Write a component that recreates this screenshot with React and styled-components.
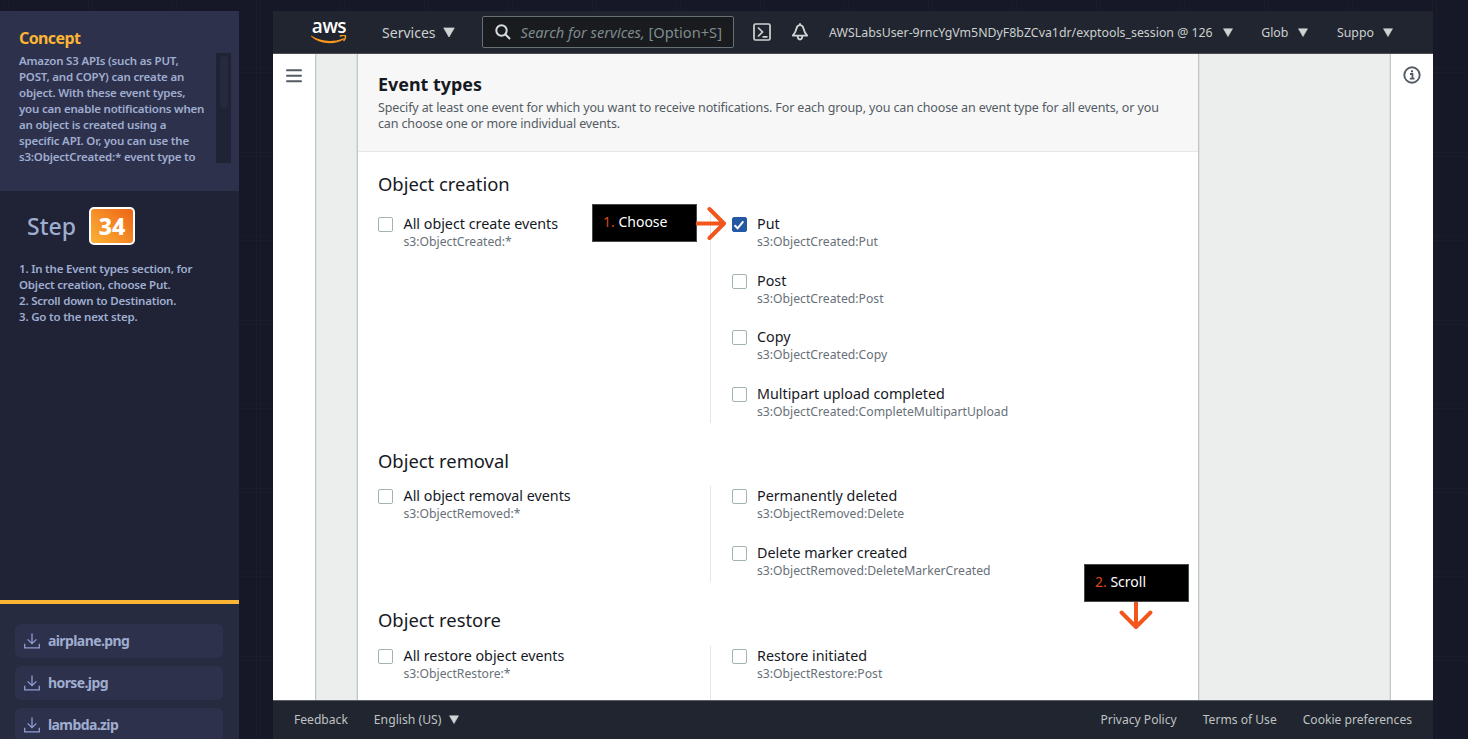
import React from "react";
import styled, { createGlobalStyle } from "styled-components";

const Global = createGlobalStyle`
  *, *::before, *::after { box-sizing: border-box; }
  html, body { margin: 0; height: 100%; overflow: hidden; }
  body { font-family: "Noto Sans", "Open Sans", sans-serif; background: #161826; }
`;

const Page = styled.div`
  display: flex;
  width: 100vw;
  height: 100vh;
  padding-top: 11px;
  overflow: hidden;
  background-color: #161827;
  background-image:
    linear-gradient(90deg, #1a1c2b 1px, transparent 1px 4px, #1a1c2b 4px 5px, transparent 5px),
    linear-gradient(180deg, #1a1c2b 1px, transparent 1px 4px, #1a1c2b 4px 5px, transparent 5px);
  background-size: 84px 84px;
  background-position: 4px 68px;
`;

const Sidebar = styled.aside`
  width: 239px;
  flex: none;
  display: flex;
  flex-direction: column;
  background: #202335;
  color: #9fadd0;
`;

const Concept = styled.section`
  height: 180px;
  flex: none;
  padding: 16px 8px 0 19px;
  background: #2e314b;
`;

const ConceptTitle = styled.h2`
  margin: 0;
  font-size: 16px;
  line-height: 22px;
  font-weight: 700;
  letter-spacing: -0.6px;
  color: #fbb534;
`;

const ConceptBody = styled.div`
  display: flex;
  justify-content: space-between;
  margin-top: 4px;
  height: 110px;
`;

const SideText = styled.p`
  margin: 0;
  font-size: 11.5px;
  line-height: 16px;
  font-weight: 600;
  letter-spacing: -0.2px;
  white-space: nowrap;
  color: #9fadd0;
`;

const ScrollTrack = styled.div`
  width: 15px;
  height: 110px;
  padding: 3px 3px 0 4px;
  background: #202335;
`;

const ScrollThumb = styled.div`
  height: 52px;
  border-radius: 4px;
  background: #272a3f;
`;

const Step = styled.section`
  flex: 1;
  padding: 16px 19px;
`;

const StepHead = styled.div`
  display: flex;
  align-items: center;
  gap: 13px;
  height: 38px;
  margin: 0 0 16px 8px;
  font-size: 23px;
  font-weight: 500;
`;

const StepNumber = styled.span`
  width: 46px;
  height: 38px;
  border: 2px solid #fff;
  border-radius: 5px;
  background: linear-gradient(45deg, #fbb234, #ee6417);
  color: #fff;
  font-size: 23px;
  line-height: 34px;
  font-weight: 800;
  text-align: center;
`;

const Files = styled.section`
  height: 139px;
  flex: none;
  padding: 20px 16px 0 15px;
  border-top: 4px solid #fbb534;
  background: #272b3f;
  display: flex;
  flex-direction: column;
  gap: 8px;
  overflow: hidden;
`;

const FileRow = styled.div`
  flex: none;
  height: 34px;
  display: flex;
  align-items: center;
  gap: 8px;
  padding: 0 0 1px 9px;
  border-radius: 6px;
  background: #2e314b;
  color: #9fadd0;
  font-size: 14px;
  line-height: 20px;
  font-weight: 700;
  letter-spacing: -0.6px;
`;

const Console = styled.main`
  width: 1160px;
  margin-left: 34px;
  flex: none;
  display: flex;
  flex-direction: column;
  background: #fff;
`;

const TopBar = styled.header`
  height: 43px;
  flex: none;
  display: flex;
  align-items: center;
  background: #21252f;
  border-bottom: 1px solid #4a4d52;
  color: #ccd0d0;
`;

const Logo = styled.div`
  width: 36px;
  height: 26px;
  margin: 2px 0 0 38px;
  display: flex;
  flex-direction: column;
  align-items: center;
`;

const LogoWord = styled.span`
  height: 15px;
  font-family: "Open Sans", sans-serif;
  font-size: 19px;
  line-height: 12px;
  font-weight: 600;
  letter-spacing: -0.5px;
  color: #fff;
`;

const Menu = styled.div`
  display: flex;
  align-items: center;
  gap: ${(p) => p.$gap}px;
  margin-left: ${(p) => p.$ml}px;
  font-size: ${(p) => p.$size || 12.35}px;
  white-space: nowrap;
`;

const Search = styled.div`
  width: 252px;
  height: 32px;
  margin-left: 27px;
  display: flex;
  align-items: center;
  gap: 10px;
  padding-left: 12px;
  border: 1px solid #687078;
  border-radius: 2px;
  background: #1a1b1f;
  color: #7f8c8d;
  font-size: 14.65px;
  white-space: nowrap;
`;

const IconSlot = styled.div`
  display: flex;
  margin-left: ${(p) => p.$ml}px;
`;

const Body = styled.div`
  flex: 1;
  min-height: 0;
  display: flex;
  overflow: hidden;
  background: #eceeee;
`;

const Rail = styled.div`
  width: 42px;
  flex: none;
  display: flex;
  justify-content: center;
  padding-top: ${(p) => p.$pt}px;
  background: #fff;
  box-shadow: 0 0 0 1.3px #c2c9ca;
`;

const Panel = styled.section`
  position: relative;
  width: 840px;
  flex: none;
  margin: 0 193px 0 43px;
  background: #fff;
  box-shadow: 0 0 0 1.3px #bfc6c7;
`;

const PanelHead = styled.div`
  height: 98px;
  padding: 18px 20px 0;
  border-bottom: 1px solid #e6e8e8;
  background: #f7f7f7;
`;

const PanelTitle = styled.h1`
  margin: 0;
  font-size: 17.9px;
  line-height: 24px;
  font-weight: 700;
  color: #16191f;
`;

const PanelText = styled.p`
  margin: 4px 0 0;
  font-size: 12.5px;
  line-height: 16px;
  letter-spacing: -0.127px;
  color: #545b64;
  white-space: nowrap;
`;

const PanelBody = styled.div`
  padding: 20px 20px 0;
`;

const Group = styled.section`
  margin-bottom: 26px;
`;

const GroupTitle = styled.h2`
  margin: 0 0 ${(p) => p.$mb}px;
  font-size: 18.4px;
  line-height: 23px;
  padding-bottom: 1px;
  font-weight: 400;
  color: #16191f;
`;

const Columns = styled.div`
  display: grid;
  grid-template-columns: 332px 1fr;
  min-height: 96px;
`;

const Column = styled.div`
  display: flex;
  flex-direction: column;
  gap: 17px;
  ${(p) => p.$ruled && "border-left: 1px solid #e3e6e6; padding-left: 20.5px;"}
`;

const Option = styled.div`
  height: 39.5px;
  display: flex;
  align-items: flex-start;
  gap: 10.5px;
  white-space: nowrap;
`;

const Box = styled.span`
  width: 15px;
  height: 15px;
  flex: none;
  margin: 3px 0 0;
  display: flex;
  align-items: center;
  justify-content: center;
  border: 1px solid ${(p) => (p.$on ? "#2458a3" : "#a3b3b4")};
  border-radius: 2px;
  background: ${(p) => (p.$on ? "#2458a3" : "#fff")};
`;

const OptionLabel = styled.div`
  font-size: 14.3px;
  line-height: 20px;
  color: #16191f;
`;

const OptionCode = styled.div`
  font-size: 12.2px;
  line-height: 16px;
  color: #687078;
`;

const Callout = styled.div`
  position: absolute;
  left: ${(p) => p.$x}px;
  top: ${(p) => p.$y}px;
  width: 105px;
  height: 38px;
  padding-left: 10px;
  border: 1px solid #46484c;
  background: #000;
  color: #fff;
  font-size: 14px;
  line-height: 34px;
  white-space: nowrap;
  b { color: #d8481a; font-weight: 400; }
`;

const Arrow = styled.svg`
  position: absolute;
  left: ${(p) => p.$x}px;
  top: ${(p) => p.$y}px;
`;

const Footer = styled.footer`
  height: 39px;
  flex: none;
  display: flex;
  align-items: center;
  gap: 26px;
  padding: 0 21px 2px;
  background: #21252f;
  border-top: 1px solid #5b5e62;
  color: #bfc3c4;
  font-size: 12.1px;
  white-space: nowrap;
`;

const Spacer = styled.div`
  flex: 1;
`;

const Caret = ({ w = 10, h = 9 }) => (
  <svg width={w} height={h} viewBox="0 0 10 9">
    <path d="M.5.8h9L5 8.6z" fill="#d0d4d4" stroke="#d0d4d4" strokeWidth=".6" strokeLinejoin="round" />
  </svg>
);

const Download = () => (
  <svg width="16" height="16" viewBox="0 0 16 16" fill="none" stroke="#8f9cd6" strokeWidth="1.3">
    <path d="M8 .5v10M3.6 6.4 8 10.700l4.400-4.300M.7 10.800v4h14.600v-4" />
  </svg>
);

const Item = ({ label, code, on }) => (
  <Option>
    <Box $on={on}>
      {on && (
        <svg width="12" height="12" viewBox="0 0 12 12" fill="none" stroke="#fff" strokeWidth="2">
          <path d="M1.500 6.300 4.600 9.300 10.300 2.400" />
        </svg>
      )}
    </Box>
    <div>
      <OptionLabel>{label}</OptionLabel>
      <OptionCode>{code}</OptionCode>
    </div>
  </Option>
);

const groups = [
  {
    title: "Object creation", mb: 18,
    all: ["All object create events", "s3:ObjectCreated:*"],
    items: [
      ["Put", "s3:ObjectCreated:Put", true],
      ["Post", "s3:ObjectCreated:Post"],
      ["Copy", "s3:ObjectCreated:Copy"],
      ["Multipart upload completed", "s3:ObjectCreated:CompleteMultipartUpload"],
    ],
  },
  {
    title: "Object removal", mb: 13,
    all: ["All object removal events", "s3:ObjectRemoved:*"],
    items: [
      ["Permanently deleted", "s3:ObjectRemoved:Delete"],
      ["Delete marker created", "s3:ObjectRemoved:DeleteMarkerCreated"],
    ],
  },
  {
    title: "Object restore", mb: 14,
    all: ["All restore object events", "s3:ObjectRestore:*"],
    items: [["Restore initiated", "s3:ObjectRestore:Post"]],
  },
];

export default function App() {
  return (
    <Page>
      <Global />
      <Sidebar>
        <Concept>
          <ConceptTitle>Concept</ConceptTitle>
          <ConceptBody>
            <SideText>
              Amazon S3 APIs (such as PUT,<br />
              POST, and COPY) can create an<br />
              object. With these event types,<br />
              you can enable notifications when<br />
              an object is created using a<br />
              specific API. Or, you can use the<br />
              s3:ObjectCreated:* event type to
            </SideText>
            <ScrollTrack><ScrollThumb /></ScrollTrack>
          </ConceptBody>
        </Concept>
        <Step>
          <StepHead>Step<StepNumber>34</StepNumber></StepHead>
          <SideText>
            1. In the Event types section, for<br />
            Object creation, choose Put.<br />
            2. Scroll down to Destination.<br />
            3. Go to the next step.
          </SideText>
        </Step>
        <Files>
          <FileRow><Download />airplane.png</FileRow>
          <FileRow><Download />horse.jpg</FileRow>
          <FileRow><Download />lambda.zip</FileRow>
        </Files>
      </Sidebar>

      <Console>
        <TopBar>
          <Logo>
            <LogoWord>aws</LogoWord>
            <svg width="36" height="9" viewBox="0 0 36 9" fill="none">
              <path d="M.6.800C9 6.500 22 7.500 32 3.400c.9-.4 1.500.4.700 1C25 9.800 8.500 9.800.2 1.500c-.3-.4 0-.9.400-.7z" fill="#f7981d" />
              <path d="M28.800 1.300c2.300-1 4.900-1 5.600-.4.500.6-.2 3.400-1.900 5" stroke="#f7981d" strokeWidth="1.500" />
            </svg>
          </Logo>
          <Menu $ml={35} $gap={7} $size={14.05}>Services<Caret w={12} h={10.5} /></Menu>
          <Search>
            <svg width="16" height="16" viewBox="0 0 16 16" fill="none" stroke="#d5dbdb" strokeWidth="2">
              <circle cx="6.500" cy="6.500" r="5.200" />
              <path d="m10.300 10.300 4.700 4.700" />
            </svg>
            <span><i>Search for services,</i> [Option+S]</span>
          </Search>
          <IconSlot $ml={19}>
            <svg width="18" height="18" viewBox="0 0 18 18" fill="none" stroke="#d0d4d4" strokeWidth="1.700">
              <rect x="1" y="1" width="16" height="16" rx="1.500" />
              <path d="m5 4.500 4.500 4.500L5 13.500M9.500 13.800h5" />
            </svg>
          </IconSlot>
          <IconSlot $ml={20}>
            <svg width="18" height="18" viewBox="0 0 18 18" fill="none" stroke="#d0d4d4" strokeWidth="1.800" strokeLinejoin="round">
              <path d="M9 2.200c-2 0-3 1.300-3.400 3C5 8 4 10 1.800 12.600h14.400C14 10 13 8 12.400 5.200 12 3.500 11 2.200 9 2.200zM9 .3v2M6.700 13.300c0 1.800.8 3.200 2.300 3.200s2.300-1.400 2.300-3.200" />
            </svg>
          </IconSlot>
          <Menu $ml={20.5} $gap={10}>AWSLabsUser-9rncYgVm5NDyF8bZCva1dr/exptools_session @ 126<Caret /></Menu>
          <Menu $ml={28.5} $gap={10}>Glob<Caret /></Menu>
          <Menu $ml={28.5} $gap={9.5}>Suppo<Caret /></Menu>
        </TopBar>
        <Body>
          <Rail $pt={15}>
            <svg width="16" height="14" viewBox="0 0 16 14" stroke="#545b64" strokeWidth="2" strokeLinecap="round">
              <path d="M1 1.300h14M1 6.800h14M1 12.300h14" />
            </svg>
          </Rail>
          <Panel>
            <PanelHead>
              <PanelTitle>Event types</PanelTitle>
              <PanelText>
                Specify at least one event for which you want to receive notifications. For each group, you can choose an event type for all events, or you<br />
                can choose one or more individual events.
              </PanelText>
            </PanelHead>
            <PanelBody>
              {groups.map((g) => (
                <Group key={g.title}>
                  <GroupTitle $mb={g.mb}>{g.title}</GroupTitle>
                  <Columns>
                    <Column><Item label={g.all[0]} code={g.all[1]} /></Column>
                    <Column $ruled>
                      {g.items.map(([label, code, on]) => (
                        <Item key={label} label={label} code={code} on={on} />
                      ))}
                    </Column>
                  </Columns>
                </Group>
              ))}
            </PanelBody>
            <Callout $x={234} $y={149.500}><b>1.</b> Choose</Callout>
            <Arrow $x={338} $y={151.500} width="32" height="36" viewBox="0 0 32 36" fill="none" stroke="#f2561d" strokeWidth="4" strokeLinecap="round" strokeLinejoin="round">
              <path d="M1 17.500h27M13.500 3 28 17.500 13.500 32" />
            </Arrow>
            <Callout $x={726} $y={510}><b>2.</b> Scroll</Callout>
            <Arrow $x={760} $y={548} width="36" height="30" viewBox="0 0 36 30" fill="none" stroke="#f2561d" strokeWidth="4" strokeLinejoin="round">
              <path d="M18 0v25" />
              <path d="M3.500 10.500 18 25l14.500-14.500" strokeLinecap="round" />
            </Arrow>
          </Panel>
          <Rail $pt={12}>
            <svg width="18" height="18" viewBox="0 0 18 18" fill="none" stroke="#545b64">
              <circle cx="9" cy="9" r="7.700" strokeWidth="1.900" />
              <path d="M7 8h2.500v4.500M6.800 12.700h4.700" strokeWidth="1.800" />
              <path d="M8 5.200h2" strokeWidth="2" />
            </svg>
          </Rail>
        </Body>
        <Footer>
          <span>Feedback</span>
          <Menu $ml={0} $gap={8} $size={12.2}>English (US)<Caret /></Menu>
          <Spacer />
          <span>Privacy Policy</span>
          <span>Terms of Use</span>
          <span>Cookie preferences</span>
        </Footer>
      </Console>
    </Page>
  );
}
